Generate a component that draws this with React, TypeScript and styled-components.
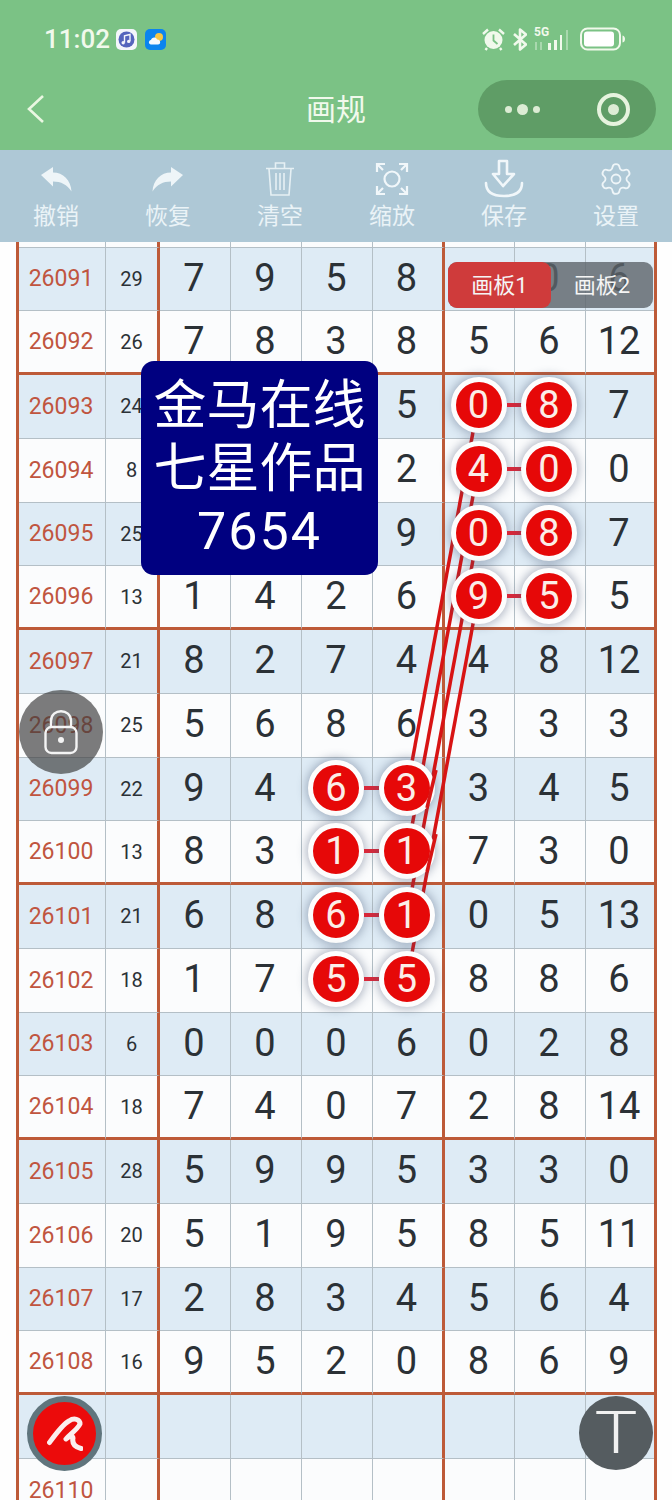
import { FC } from "react";
import styled, { createGlobalStyle } from "styled-components";
import { Settings } from "lucide-react";

const rowHeight = 63.75;
const orange = "#bd5a38";
const gridLine = "#b4bfc6";
const cjk = `"Noto Sans CJK SC", sans-serif`;
const digits = `Roboto, "Noto Sans CJK SC", sans-serif`;

const GlobalStyle = createGlobalStyle`
  html, body { margin: 0; padding: 0; background: #fefefe; }
  #root { width: 672px; height: 1500px; overflow: hidden; }
`;

const Page = styled.div`
  position: relative;
  width: 672px;
  height: 1500px;
  overflow: hidden;
  background: #fefefe;
  font-family: ${cjk};
`;

const Header = styled.header`
  height: 150px;
  background: #7bc285;
  display: flex;
  flex-direction: column;
`;

const StatusBar = styled.div`
  height: 80px;
  display: flex;
  align-items: center;
  padding: 0 46px 2px 44px;
  box-sizing: border-box;
  color: #f1f9ec;
`;

const Clock = styled.span`
  font-family: ${digits};
  font-size: 26px;
  font-weight: 500;
  width: 64px;
`;

const StatusLeft = styled.div`
  display: flex;
  align-items: center;
  gap: 8px;
  flex: 1;
`;

const StatusRight = styled.div`
  display: flex;
  align-items: center;
`;

const FiveG = styled.span`
  position: relative;
  display: block;
  width: 38px;
  height: 24px;
  margin: 0 8px 0 7px;
  span {
    position: absolute;
    left: 0;
    top: -2px;
    font-family: ${digits};
    font-size: 12px;
    font-weight: 700;
    line-height: 14px;
  }
`;

const NavBar = styled.div`
  height: 70px;
  display: flex;
  align-items: center;
  justify-content: space-between;
  padding: 0 16px 12px 26px;
  box-sizing: border-box;
  position: relative;
  color: #f1f9ec;
`;

const Title = styled.h1`
  position: absolute;
  left: 0;
  right: 0;
  top: 5px;
  margin: 0;
  text-align: center;
  font-size: 30px;
  font-weight: 400;
  line-height: 44px;
`;

const Capsule = styled.div`
  width: 178px;
  height: 58px;
  border-radius: 29px;
  background: #5f9d66;
  display: flex;
  align-items: center;
  padding: 0 26px 0 27px;
  box-sizing: border-box;
  justify-content: space-between;
`;

const Dots = styled.div`
  display: flex;
  align-items: center;
  gap: 5px;
`;

const Dot = styled.i<{ $big?: boolean }>`
  display: block;
  width: ${({ $big }) => ($big ? 11 : 7)}px;
  height: ${({ $big }) => ($big ? 11 : 7)}px;
  border-radius: 50%;
  background: #dcecd4;
`;

const Target = styled.div`
  width: 33px;
  height: 33px;
  border: 4px solid #e6f3de;
  border-radius: 50%;
  box-sizing: border-box;
  display: flex;
  align-items: center;
  justify-content: center;
  &::after {
    content: "";
    width: 11px;
    height: 11px;
    border-radius: 50%;
    background: #dcecd4;
  }
`;

const Toolbar = styled.nav`
  height: 92px;
  background: #aec8d6;
  display: grid;
  grid-template-columns: repeat(6, 112px);
`;

const Tool = styled.div`
  display: flex;
  flex-direction: column;
  align-items: center;
  color: #eaf3f7;
`;

const ToolIcon = styled.div`
  height: 50px;
  display: flex;
  align-items: center;
  justify-content: center;
  padding-top: 8px;
  box-sizing: border-box;
`;

const ToolLabel = styled.span`
  font-size: 23px;
  line-height: 30px;
  margin-top: -1px;
`;

const Sheet = styled.section`
  width: 641px;
  margin-left: 16px;
  border-left: 3px solid ${orange};
  border-right: 3px solid ${orange};
  box-sizing: border-box;
`;

const Row = styled.div<{ $h: number }>`
  display: grid;
  grid-template-columns: 87px 54px 71px 71px 71px 72px 70px 71px 68px;
  height: ${({ $h }) => $h}px;
`;

const Cell = styled.div<{ $shade?: boolean; $major?: boolean; $edge?: boolean; $last?: boolean }>`
  box-sizing: border-box;
  display: flex;
  align-items: center;
  justify-content: center;
  background: ${({ $shade }) => ($shade ? "#deebf5" : "#fbfcfd")};
  border-bottom: ${({ $major }) => ($major ? `3px solid ${orange}` : `1.5px solid ${gridLine}`)};
  border-right: ${({ $edge, $last }) =>
    $last ? "none" : $edge ? `3px solid ${orange}` : `1.5px solid ${gridLine}`};
  color: #2b3136;
  font-family: ${digits};
`;

const IdCell = styled(Cell)`
  color: #c0553f;
  font-size: 23px;
  padding-right: 2px;
`;

const SumCell = styled(Cell)`
  font-size: 20px;
`;

const NumCell = styled(Cell)`
  font-size: 38px;
  padding: 0 2px 2px 0;
`;

const Ball = styled.div<{ $link?: boolean }>`
  position: relative;
  z-index: 2;
  flex: none;
  width: 56px;
  height: 56px;
  box-sizing: border-box;
  border: 5px solid #fdfdfd;
  border-radius: 50%;
  background: #e60808;
  color: #fbeee8;
  font-size: 38px;
  display: flex;
  align-items: center;
  justify-content: center;
  box-shadow: 0 0 10px 2px rgba(70, 85, 115, 0.4);
  ${({ $link }) =>
    $link &&
    `&::after {
      content: "";
      position: absolute;
      left: 51px;
      top: 21px;
      width: 15px;
      height: 4px;
      background: #d8283a;
    }`}
`;

const LineLayer = styled.svg<{ $z: number }>`
  position: absolute;
  left: 0;
  top: 0;
  width: 672px;
  height: 1500px;
  z-index: ${({ $z }) => $z};
  pointer-events: none;
`;

const Notice = styled.div`
  position: absolute;
  z-index: 5;
  left: 141px;
  top: 361px;
  width: 237px;
  height: 214px;
  box-sizing: border-box;
  padding-top: 9px;
  border-radius: 13px;
  background: #000080;
  color: #fff;
  text-align: center;
  font-size: 53px;
  line-height: 63px;
`;

const NoticeNumber = styled.div`
  font-family: ${digits};
  font-size: 52px;
  letter-spacing: 2px;
  margin-top: 4px;
`;

const BoardTabs = styled.div`
  position: absolute;
  z-index: 5;
  left: 448px;
  top: 262px;
  width: 205px;
  height: 46px;
  border-radius: 9px;
  background: rgba(92, 100, 106, 0.8);
  display: flex;
  color: #f5f5f5;
  font-size: 22px;
`;

const BoardTab = styled.div<{ $active?: boolean }>`
  width: ${({ $active }) => ($active ? 103 : 102)}px;
  border-radius: 9px;
  padding-bottom: 3px;
  box-sizing: border-box;
  display: flex;
  align-items: baseline;
  justify-content: center;
  line-height: 43px;
  background: ${({ $active }) => ($active ? "#cf3b3b" : "transparent")};
  span {
    font-family: ${digits};
  }
`;

const LockButton = styled.div`
  position: absolute;
  z-index: 5;
  left: 19px;
  top: 690px;
  width: 84px;
  height: 84px;
  border-radius: 50%;
  background: rgba(62, 62, 62, 0.68);
  display: flex;
  align-items: center;
  justify-content: center;
`;

const PenButton = styled.div`
  position: absolute;
  z-index: 5;
  left: 27px;
  top: 1396px;
  width: 75px;
  height: 75px;
  box-sizing: border-box;
  border: 6px solid #60757d;
  border-radius: 50%;
  background: #ec0b0b;
  display: flex;
  align-items: center;
  justify-content: center;
`;

const TextButton = styled.div`
  position: absolute;
  z-index: 5;
  left: 579px;
  top: 1396px;
  width: 74px;
  height: 74px;
  border-radius: 50%;
  background: #555c60;
  color: #f1f1f1;
  display: flex;
  align-items: center;
  justify-content: center;
  font-family: Roboto, sans-serif;
  font-weight: 300;
  font-size: 60px;
  line-height: 74px;
  span {
    display: block;
    transform: scaleX(1.2);
  }
`;

type Value = number | string;
type RowData = { id: number; sum: Value; nums: Value[]; balls?: number[] };

const rows: RowData[] = [
  { id: 26091, sum: 29, nums: [7, 9, 5, 8, "", 0, 6] },
  { id: 26092, sum: 26, nums: [7, 8, 3, 8, 5, 6, 12] },
  { id: 26093, sum: 24, nums: ["", "", "", 5, 0, 8, 7], balls: [4, 5] },
  { id: 26094, sum: 8, nums: ["", "", "", 2, 4, 0, 0], balls: [4, 5] },
  { id: 26095, sum: 25, nums: ["", "", "", 9, 0, 8, 7], balls: [4, 5] },
  { id: 26096, sum: 13, nums: [1, 4, 2, 6, 9, 5, 5], balls: [4, 5] },
  { id: 26097, sum: 21, nums: [8, 2, 7, 4, 4, 8, 12] },
  { id: 26098, sum: 25, nums: [5, 6, 8, 6, 3, 3, 3] },
  { id: 26099, sum: 22, nums: [9, 4, 6, 3, 3, 4, 5], balls: [2, 3] },
  { id: 26100, sum: 13, nums: [8, 3, 1, 1, 7, 3, 0], balls: [2, 3] },
  { id: 26101, sum: 21, nums: [6, 8, 6, 1, 0, 5, 13], balls: [2, 3] },
  { id: 26102, sum: 18, nums: [1, 7, 5, 5, 8, 8, 6], balls: [2, 3] },
  { id: 26103, sum: 6, nums: [0, 0, 0, 6, 0, 2, 8] },
  { id: 26104, sum: 18, nums: [7, 4, 0, 7, 2, 8, 14] },
  { id: 26105, sum: 28, nums: [5, 9, 9, 5, 3, 3, 0] },
  { id: 26106, sum: 20, nums: [5, 1, 9, 5, 8, 5, 11] },
  { id: 26107, sum: 17, nums: [2, 8, 3, 4, 5, 6, 4] },
  { id: 26108, sum: 16, nums: [9, 5, 2, 0, 8, 6, 9] },
  { id: 26109, sum: "", nums: ["", "", "", "", "", "", ""] },
  { id: 26110, sum: "", nums: ["", "", "", "", "", "", ""] },
];

const links = [
  [478, 405, 407, 789],
  [478, 469, 407, 853],
  [478, 533, 407, 916],
  [478, 597, 407, 980],
];

// the part of a link that runs over the white ring of the ball next to it
const overRing = [
  [436, 770, 427, 808],
  [436, 834, 427, 872],
];

const UndoIcon: FC<{ flip?: boolean }> = ({ flip }) => (
  <svg width="32" height="26" viewBox="0 0 32 26" style={flip ? { transform: "scaleX(-1)" } : undefined}>
    <path d="M1 9 13 1V6.500C23 6.500 31 14 31.500 25.500 27 18.500 21 15.500 13 15.500V20.500Z" fill="#eef5f8" />
  </svg>
);

const TrashIcon = () => (
  <svg width="30" height="36" viewBox="0 0 30 36" fill="none" stroke="#e6f0f4" strokeWidth="1.6">
    <path d="M1 7.500H29M10.500 7V2H19.500V7M4 8 6 34H24L26 8M11 12V29M15 12V29M19 12V29" />
  </svg>
);

const ScanIcon = () => (
  <svg width="34" height="34" viewBox="0 0 34 34" fill="none" stroke="#f1f7fa" strokeWidth="2.2">
    <circle cx="17" cy="17" r="7.500" />
    <path d="M2 10V2H10M2 2 8 8M32 10V2H24M32 2 26 8M2 24V32H10M2 32 8 26M32 24V32H24M32 32 26 26" />
  </svg>
);

const SaveIcon = () => (
  <svg width="40" height="40" viewBox="0 0 40 40" fill="none" stroke="#f1f7fa" strokeWidth="2.600">
    <path d="M15 2H23V15H30L19 27 9 15H15Z" strokeLinejoin="round" />
    <path d="M2 24C2 33 9 37 20 37S38 33 38 24" strokeLinecap="round" />
  </svg>
);

const AlarmIcon = () => (
  <svg width="23" height="24" viewBox="0 0 23 24">
    <circle cx="11.500" cy="13" r="9" fill="#f1f9ec" />
    <path d="M11.500 7.500V13.500L15.500 17" fill="none" stroke="#7bc285" strokeWidth="1.800" />
    <path d="M1 7 6 2.500M22 7 17 2.500M5 21 3.500 23M18 21 19.500 23" stroke="#f1f9ec" strokeWidth="2.400" fill="none" />
  </svg>
);

const BluetoothIcon = () => (
  <svg width="14" height="23" viewBox="0 0 14 23" fill="none" stroke="#f1f9ec" strokeWidth="2.600" style={{ marginLeft: 8 }}>
    <path d="M1 6 13 16.500 7 21.500V1.500L13 6.500 1 17" strokeLinejoin="round" />
  </svg>
);

const SignalIcon = () => (
  <svg width="38" height="22" viewBox="0 0 38 22" style={{ position: "absolute", left: 0, top: 2 }}>
    <path d="M1 13H3V21H1ZM6 13H8V21H6Z" fill="#a9d8ae" />
    <path d="M14 14H17V21H14ZM20 11H23V21H20ZM26 6H28V21H26Z" fill="#f1f9ec" />
    <path d="M32 1H34V21H32Z" fill="#a9d8ae" />
  </svg>
);

const BatteryIcon = () => (
  <svg width="46" height="24" viewBox="0 0 46 24" fill="none">
    <rect x="1" y="1.500" width="39" height="21" rx="6.500" stroke="#f1f9ec" strokeWidth="2" />
    <rect x="4" y="4.500" width="30" height="15" rx="3" fill="#fff" />
    <path d="M42.500 8.500C44.500 9 45 10.500 45 12S44.500 15 42.500 15.500Z" fill="#f1f9ec" />
  </svg>
);

const MusicIcon = () => (
  <svg width="21" height="21" viewBox="0 0 21 21">
    <rect width="21" height="21" rx="5" fill="#f4f6fb" />
    <circle cx="10.500" cy="10.500" r="8" fill="#5565bd" />
    <path d="M8.500 13.500V6.800L14 5.500V12" fill="none" stroke="#f4f6fb" strokeWidth="1.400" />
    <circle cx="7.200" cy="13.800" r="1.700" fill="#f4f6fb" />
    <circle cx="12.700" cy="12.400" r="1.700" fill="#f4f6fb" />
  </svg>
);

const WeatherIcon = () => (
  <svg width="21" height="21" viewBox="0 0 21 21">
    <rect width="21" height="21" rx="5" fill="#0b84ee" />
    <circle cx="14" cy="8" r="4" fill="#f6c643" />
    <path d="M6 15.500C3.500 15.500 3 11.500 6 11 6.500 8 11 7.500 12 10.500 15.500 10 16.500 15.500 13 15.500Z" fill="#f5f9fd" />
  </svg>
);

const BackIcon = () => (
  <svg width="20" height="30" viewBox="0 0 20 30" fill="none" stroke="#eaf7e2" strokeWidth="2.600">
    <path d="M17 2 3 15 17 28" />
  </svg>
);

const LockIcon = () => (
  <svg width="36" height="46" viewBox="0 0 36 46" fill="none" stroke="#f4f4f4" strokeWidth="2.400">
    <rect x="2.500" y="18" width="31" height="26" rx="6" />
    <path d="M8 18V12C8 -1 28 -1 28 12V18" />
    <circle cx="18" cy="31" r="3" fill="#f4f4f4" stroke="none" />
  </svg>
);

const PenIcon = () => (
  <svg width="36" height="36" viewBox="0 0 36 36" fill="none" stroke="#fbeeee" strokeWidth="5" strokeLinecap="round" strokeLinejoin="round">
    <path d="M2.500 26.500C8 19 16 8 22 5 27 1.500 33 3 33 8 30 14 23 18 19 23 22 20 26 19 26 22 25 27 27 31 34 32.500" />
  </svg>
);

const App: FC = () => (
  <Page>
    <GlobalStyle />
    <Header>
      <StatusBar>
        <StatusLeft>
          <Clock>11:02</Clock>
          <MusicIcon />
          <WeatherIcon />
        </StatusLeft>
        <StatusRight>
          <AlarmIcon />
          <BluetoothIcon />
          <FiveG>
            <span>5G</span>
            <SignalIcon />
          </FiveG>
          <BatteryIcon />
        </StatusRight>
      </StatusBar>
      <NavBar>
        <BackIcon />
        <Title>画规</Title>
        <Capsule>
          <Dots>
            <Dot />
            <Dot $big />
            <Dot />
          </Dots>
          <Target />
        </Capsule>
      </NavBar>
    </Header>

    <Toolbar>
      <Tool>
        <ToolIcon>
          <UndoIcon />
        </ToolIcon>
        <ToolLabel>撤销</ToolLabel>
      </Tool>
      <Tool>
        <ToolIcon>
          <UndoIcon flip />
        </ToolIcon>
        <ToolLabel>恢复</ToolLabel>
      </Tool>
      <Tool>
        <ToolIcon>
          <TrashIcon />
        </ToolIcon>
        <ToolLabel>清空</ToolLabel>
      </Tool>
      <Tool>
        <ToolIcon>
          <ScanIcon />
        </ToolIcon>
        <ToolLabel>缩放</ToolLabel>
      </Tool>
      <Tool>
        <ToolIcon>
          <SaveIcon />
        </ToolIcon>
        <ToolLabel>保存</ToolLabel>
      </Tool>
      <Tool>
        <ToolIcon>
          <Settings size={36} strokeWidth={1.2} color="#eef5f8" />
        </ToolIcon>
        <ToolLabel>设置</ToolLabel>
      </Tool>
    </Toolbar>

    <Sheet>
      <Row $h={5.5}>
        {Array.from({ length: 9 }, (_, col) => (
          <Cell key={col} $edge={col === 1 || col === 5} $last={col === 8} />
        ))}
      </Row>
      {rows.map((row, i) => {
        const shade = i % 2 === 0;
        const major = i % 4 === 1;
        return (
          <Row key={row.id} $h={rowHeight}>
            <IdCell $shade={shade} $major={major}>
              {row.id}
            </IdCell>
            <SumCell $shade={shade} $major={major} $edge>
              {row.sum}
            </SumCell>
            {row.nums.map((n, col) => (
              <NumCell key={col} $shade={shade} $major={major} $edge={col === 3} $last={col === 6}>
                {row.balls?.includes(col) ? <Ball $link={col === row.balls[0]}>{n}</Ball> : n}
              </NumCell>
            ))}
          </Row>
        );
      })}
    </Sheet>

    <LineLayer $z={1} viewBox="0 0 672 1500">
      {links.map(([x1, y1, x2, y2]) => (
        <line key={y1} x1={x1} y1={y1} x2={x2} y2={y2} stroke="#d81414" strokeWidth="3.500" />
      ))}
    </LineLayer>
    <LineLayer $z={3} viewBox="0 0 672 1500">
      {overRing.map(([x1, y1, x2, y2]) => (
        <line key={y1} x1={x1} y1={y1} x2={x2} y2={y2} stroke="#d81414" strokeWidth="3.500" />
      ))}
    </LineLayer>

    <Notice>
      <div>金马在线</div>
      <div>七星作品</div>
      <NoticeNumber>7654</NoticeNumber>
    </Notice>

    <BoardTabs>
      <BoardTab $active>
        画板<span>1</span>
      </BoardTab>
      <BoardTab>
        画板<span>2</span>
      </BoardTab>
    </BoardTabs>

    <LockButton>
      <LockIcon />
    </LockButton>
    <PenButton>
      <PenIcon />
    </PenButton>
    <TextButton>
      <span>T</span>
    </TextButton>
  </Page>
);

export default App;
